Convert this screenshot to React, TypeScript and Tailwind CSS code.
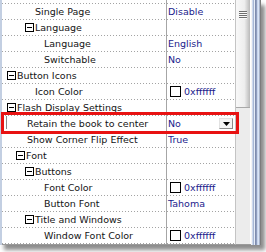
import React from "react";

type Row =
  | { kind: "group"; label: string; box: string; text: string }
  | { kind: "leaf"; label: string; text: string; value?: string; swatch?: boolean; combo?: boolean };

const rows: Row[] = [
  { kind: "leaf", label: "Single Page", text: "pl-[33px]", value: "Disable" },
  { kind: "group", label: "Language", box: "pl-[23px]", text: "ml-px" },
  { kind: "leaf", label: "Language", text: "pl-[42px]", value: "English" },
  { kind: "leaf", label: "Switchable", text: "pl-[42px]", value: "No" },
  { kind: "group", label: "Button Icons", box: "pl-[5px]", text: "ml-px" },
  { kind: "leaf", label: "Icon Color", text: "pl-[33px]", value: "0xffffff", swatch: true },
  { kind: "group", label: "Flash Display Settings", box: "pl-[5px]", text: "ml-px" },
  { kind: "leaf", label: "Retain the book to center", text: "pl-[25px]", value: "No", combo: true },
  { kind: "leaf", label: "Show Corner Flip Effect", text: "pl-[25px]", value: "True" },
  { kind: "group", label: "Font", box: "pl-[14px]", text: "ml-px" },
  { kind: "group", label: "Buttons", box: "pl-[23px]", text: "ml-px" },
  { kind: "leaf", label: "Font Color", text: "pl-[42px]", value: "0xffffff", swatch: true },
  { kind: "leaf", label: "Button Font", text: "pl-[42px]", value: "Tahoma" },
  { kind: "group", label: "Title and Windows", box: "pl-[23px]", text: "ml-px" },
  { kind: "leaf", label: "Window Font Color", text: "pl-[42px]", value: "0xffffff", swatch: true },
];

const dotted =
  "bg-[repeating-linear-gradient(to_right,#a3a3a3_0,#a3a3a3_1px,transparent_1px,transparent_3px)] bg-[length:100%_1px] bg-bottom bg-no-repeat";

function MinusBox() {
  return (
    <span className="w-[9px] h-[9px] border border-black bg-white flex items-center justify-center shrink-0">
      <span className="w-[5px] h-px bg-black" />
    </span>
  );
}

function GridRow({ row }: { row: Row }) {
  return (
    <div className={`flex h-4 ${dotted}`}>
      <div className="w-[165px] border-r border-[#a6a6a6] h-4">
        {row.kind === "group" ? (
          <div className={`h-[15px] flex items-center ${row.box}`}>
            <MinusBox />
            <span className={`${row.text} whitespace-nowrap`}>{row.label}</span>
          </div>
        ) : row.combo ? (
          <div className="h-[15px] flex items-center">
            <span className="w-px h-[13px] bg-[#8a8a8a] ml-[4px] mr-[20px] self-start" />
            <span className="whitespace-nowrap">{row.label}</span>
          </div>
        ) : (
          <div className={`h-[15px] flex items-center whitespace-nowrap ${row.text}`}>{row.label}</div>
        )}
      </div>
      <div className="flex-1 h-[15px] flex items-center pl-px text-[#1b1b8c] whitespace-nowrap">
        {row.kind === "leaf" && row.swatch && (
          <span className="w-[11px] h-[11px] border border-black bg-white ml-[2px] mr-[3px] shrink-0" />
        )}
        {row.kind === "leaf" && row.value}
        {row.kind === "leaf" && row.combo && (
          <span className="ml-auto mr-[2px] w-[14px] h-[11px] bg-[#f4f4f4] border border-[#8c8c8c] border-t-[#e2e2e2] border-l-[#e2e2e2] flex items-center justify-center">
            <svg width="7" height="4" viewBox="0 0 7 4">
              <path d="M0 0h7L3.5 4z" fill="#000" />
            </svg>
          </span>
        )}
      </div>
    </div>
  );
}

export default function App() {
  const stripes = [
    "bg-[#f4f4f4]",
    "bg-[#ccd9ef]",
    "bg-[#a7b6d2]",
    "bg-[#e6edf8]",
    "bg-[#7e8cae]",
    "bg-[#909ebd]",
    "bg-[#c6d5ee]",
    "bg-[#d9e3f4]",
    "bg-[#a8b4ca]",
    "bg-[#7c7c7c]",
  ];

  return (
    <div className="w-[266px] h-[252px] bg-white overflow-hidden">
      <div className="relative w-[261px] h-[245px] flex bg-white shadow-[4px_5px_4px_rgba(0,0,0,0.45)] font-['DejaVu_Sans',sans-serif] text-[9.5px] leading-none text-[#141414]">
        <div className="w-[2px] bg-[#c3cfe2]" />

        {/* property rows */}
        <div className="w-[233px] flex flex-col border-b border-[#9a9a9a]">
          <div className={`h-[4px] flex ${dotted}`}>
            <div className="w-[165px] border-r border-[#a6a6a6]" />
          </div>
          {rows.map((row, i) => (
            <GridRow key={i} row={row} />
          ))}
          <div className="flex-1 flex">
            <div className="w-[165px] border-r border-[#a6a6a6]" />
          </div>
        </div>

        {/* scrollbar */}
        <div className="w-[16px] flex flex-col border-l border-[#c4c4c4] border-b border-b-[#9a9a9a]">
          <div className="h-[108px] w-[14px] flex flex-col items-center pt-[11px] bg-[linear-gradient(to_right,#f8f8f8,#eeeeee_60%,#b9b9b9)] border-b border-[#a8a8a8]">
            <div className="flex flex-col w-[8px]">
              {[0, 1, 2, 3].map((n) => (
                <div key={n} className="flex flex-col">
                  <span className="h-px bg-[#6e6e6e]" />
                  <span className="h-px bg-[#fafafa]" />
                </div>
              ))}
            </div>
          </div>
          <div className="flex-1 w-[14px] bg-[#ececec]" />
        </div>

        {/* window frame */}
        <div className="flex">
          {stripes.map((s, i) => (
            <span key={i} className={`w-px h-full ${s}`} />
          ))}
        </div>

        {/* highlight around the selected property */}
        <div className="absolute left-[1px] top-[112px] w-[238px] h-[22px] border-[3px] border-[#e81212]" />
      </div>
    </div>
  );
}
